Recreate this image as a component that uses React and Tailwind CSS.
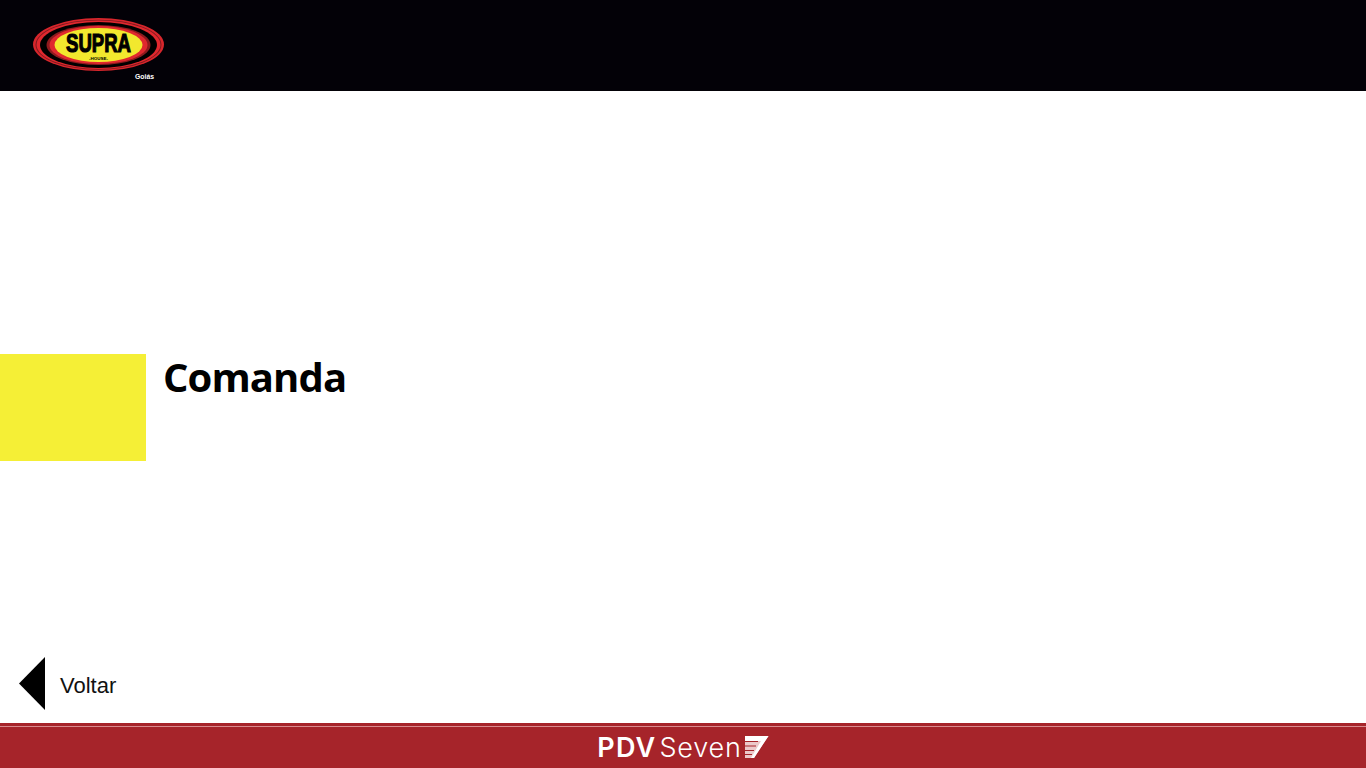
const Logo = () => (
    <svg width="136" height="62" viewBox="0 0 136 62" className="block">
        <ellipse cx="66.5" cy="26.5" rx="65.5" ry="26.5" fill="#d8262c" />
        <ellipse cx="66.5" cy="26.7" rx="63" ry="25" fill="#7d1a1f" />
        <ellipse cx="66.5" cy="26.7" rx="62" ry="24.2" fill="#e0282e" />
        <ellipse cx="66.5" cy="27" rx="58.5" ry="23" fill="#000" />
        <ellipse cx="66.5" cy="27" rx="52" ry="20" fill="#8f1a1e" />
        <ellipse cx="66.5" cy="27" rx="49" ry="19" fill="#e0282e" />
        <ellipse cx="66.5" cy="27" rx="44" ry="17" fill="#f2e82e" />
        <text x="66.5" y="34.3" textAnchor="middle" fontFamily="'Liberation Sans', sans-serif" fontWeight="700" fontSize="26" fill="#000" textLength="65" lengthAdjust="spacingAndGlyphs" stroke="#000" strokeWidth="1.2">SUPRA</text>
        <text x="66.5" y="42" textAnchor="middle" fontFamily="'Liberation Sans', sans-serif" fontWeight="700" fontSize="4" fill="#000" textLength="19" lengthAdjust="spacingAndGlyphs">-HOUSE-</text>
        <text x="112.5" y="60.5" textAnchor="middle" fontFamily="'Liberation Sans', sans-serif" fontWeight="700" fontSize="8" fill="#fff" textLength="19" lengthAdjust="spacingAndGlyphs">Goiás</text>
    </svg>
);

const SevenMark = () => (
    <svg width="24" height="23" viewBox="0 0 24 23" className="block">
        <path d="M0 0H23.5L9 22H0Z" fill="#ecc9ca" />
        <path d="M0 5.5H13M0 10H11M0 14.5H9M0 18.5H7" stroke="#a6242a" strokeWidth="1" fill="none" />
        <path d="M0 0H23.5L9 22H6L16 5H0Z" fill="#fff" />
    </svg>
);

const App = () => {
    return (
        <div className="h-screen w-full flex flex-col overflow-hidden bg-white">
            {/* Cabecalho */}
            <header className="h-[91px] shrink-0 bg-[#030107] pl-[32px] pt-[18px]">
                <Logo />
            </header>

            <main className="flex-1 flex flex-col">
                <div className="mt-[263px] flex items-start">
                    <div className="w-[146px] h-[107px] bg-[#f5ef36]"></div>
                    <h1 className="ml-[17px] text-[40px] leading-[45px] font-bold tracking-[-0.9px] text-black font-['Open_Sans',sans-serif]">
                        Comanda
                    </h1>
                </div>

                <div className="mt-auto mb-[13px] ml-[19px] flex items-center">
                    <svg width="26" height="53" viewBox="0 0 26 53" className="block">
                        <path d="M26 0V53L0 26.5Z" fill="#000" />
                    </svg>
                    <span className="ml-[15px] pt-[5px] text-[22px] leading-none text-[#111] font-['Liberation_Sans',sans-serif]">Voltar</span>
                </div>
            </main>

            {/* Rodape */}
            <footer className="h-[45px] shrink-0 bg-[#a6242a] pt-[3px]">
                <div className="h-px bg-[#d98a8d]"></div>
                <div className="flex items-center justify-center h-[41px] text-white text-[27px] leading-none font-['Inter',sans-serif]">
                    <span className="font-semibold tracking-[1.2px]">PDV</span>
                    <span className="ml-[3px] font-light tracking-[0.8px]">Seven</span>
                    <span className="ml-[3px]"><SevenMark /></span>
                </div>
            </footer>
        </div>
    );
};

export default App;
